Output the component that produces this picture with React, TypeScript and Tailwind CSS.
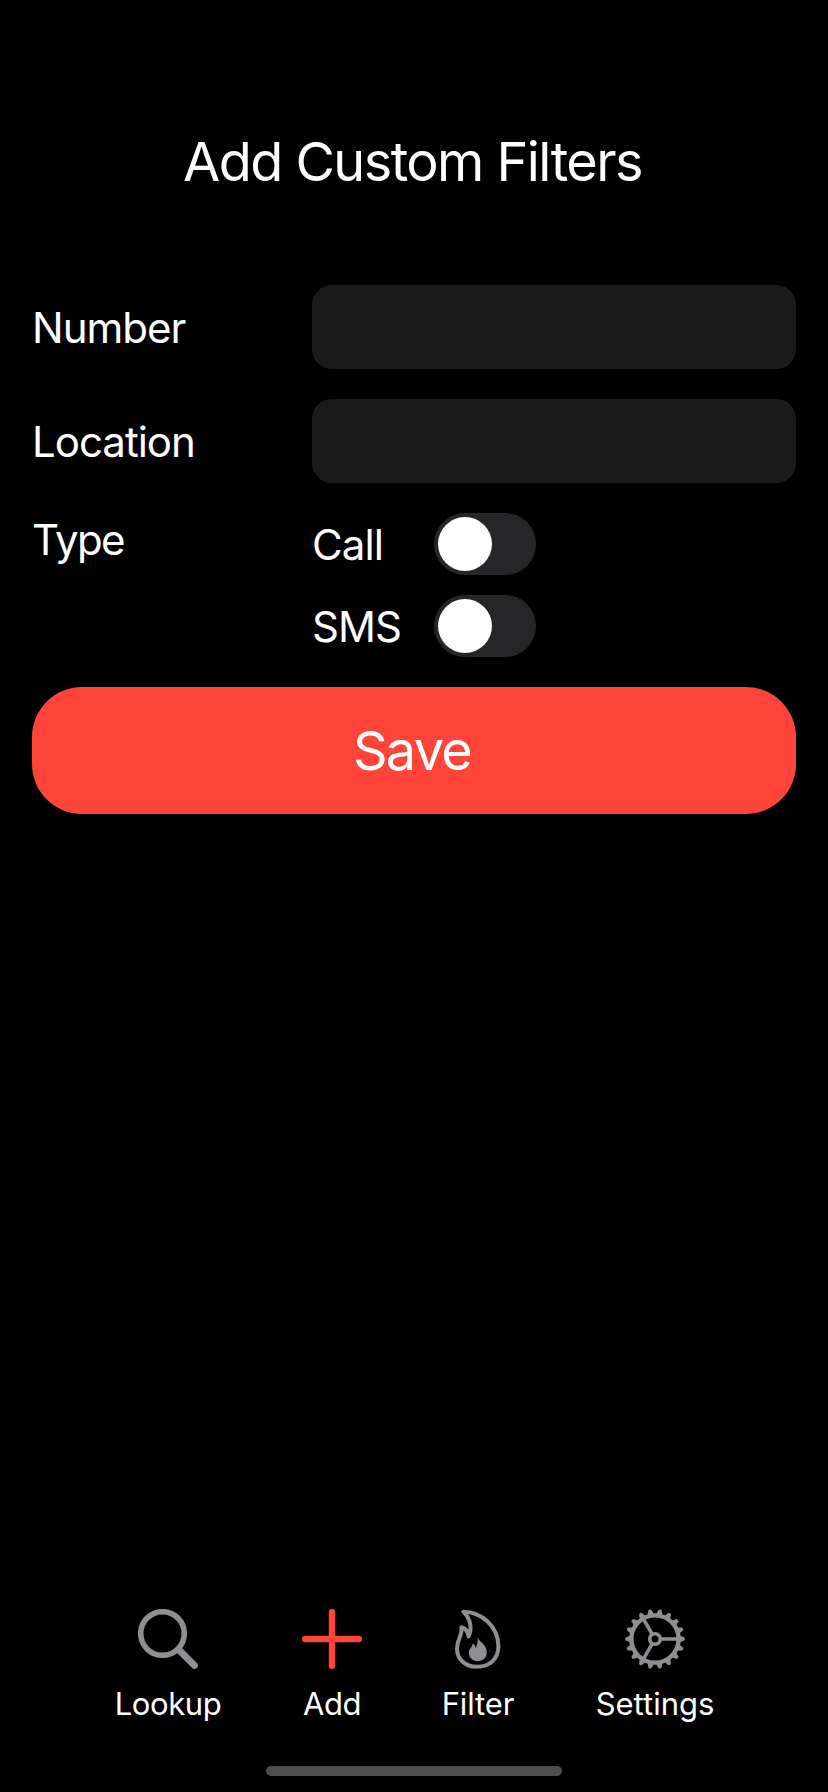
import { useState, type ReactNode } from "react";

function SearchIcon() {
  return (
    <svg viewBox="0 0 60 60" className="size-[60px]" fill="none" stroke="currentColor" strokeLinecap="round">
      <circle cx="24.5" cy="24.5" r="21.8" strokeWidth="5.6" />
      <path d="M41 41L56.4 56.4" strokeWidth="7" />
    </svg>
  );
}

function PlusIcon() {
  return (
    <svg viewBox="0 0 60 60" className="size-[60px]" fill="none" stroke="currentColor" strokeWidth="6.4" strokeLinecap="round">
      <path d="M30 3.2V56.8M3.2 30H56.8" />
    </svg>
  );
}

function FlameIcon() {
  return (
    <svg viewBox="0 0 60 60" className="size-[60px]" fill="none" stroke="currentColor" strokeLinejoin="round">
      <path
        d="M15.4 2.7C34 2.7 50.4 18 50.4 37.6C50.4 50 41.5 57.8 29 57.8C16.8 57.8 9 49.8 9 39.4C9 30.4 14.6 26.4 13.4 18.2C17.4 19 19.8 23 20.6 27.4C24.4 19.6 22.6 9.5 15.4 2.7Z"
        strokeWidth="4"
      />
      <path
        d="M29.6 27.8C30.6 33.4 38.8 34.6 38.8 43.2C38.8 48.6 34.8 52.2 29.8 52.2C24.6 52.2 20.9 48.8 20.9 43.8C20.9 39.6 24.4 38.4 24.6 34.6C26.6 35.4 27.4 37 27.4 39.2C29.6 36 30 31.6 29.6 27.8Z"
        fill="currentColor"
        stroke="none"
      />
    </svg>
  );
}

const toothAngles = Array.from({ length: 18 }, (_, i) => i * 20);

function GearIcon() {
  return (
    <svg viewBox="0 0 60 60" className="size-[60px]" fill="none" stroke="currentColor">
      {toothAngles.map((a) => (
        <path
          key={a}
          d="M54.4 26.6L59.4 28.5Q60.4 30 59.4 31.5L54.4 33.4Z"
          fill="currentColor"
          stroke="none"
          transform={`rotate(${a} 30 30)`}
        />
      ))}
      <circle cx="30" cy="30" r="23.6" strokeWidth="4.4" />
      <circle cx="30" cy="30" r="5.3" strokeWidth="3.6" />
      <path d="M36 30H53M27 24.8L18.5 10.1M27 35.2L18.5 49.9" strokeWidth="3.6" />
    </svg>
  );
}

function Field({ id, label }: { id: string; label: string }) {
  return (
    <div className="flex h-[84px] items-center">
      <label htmlFor={id} className="w-[280px] pt-[2px] text-[42px] leading-[50px] tracking-[-1px]">
        {label}
      </label>
      <input
        id={id}
        className="h-full w-[484px] rounded-[20px] bg-[#1a1a1a] px-5 text-[40px] outline-none"
      />
    </div>
  );
}

function Toggle({ label }: { label: string }) {
  const [on, setOn] = useState(false);
  return (
    <div className="flex h-[62px] items-center">
      <span className="w-[122px] pt-px text-[42px] leading-[50px] tracking-[-0.9px]">{label}</span>
      <button
        role="switch"
        aria-checked={on}
        aria-label={label}
        onClick={() => setOn(!on)}
        className={`flex h-[62px] w-[102px] items-center rounded-full p-1 ${on ? "justify-end bg-[#30d158]" : "justify-start bg-[#262628]"}`}
      >
        <span className="size-[54px] rounded-full bg-white" />
      </button>
    </div>
  );
}

function Tab({ label, width, tracking, active, children }: { label: string; width: string; tracking: string; active?: boolean; children: ReactNode }) {
  return (
    <button className={`flex flex-col items-center ${width}`}>
      <span className={active ? "text-[#ff453a]" : "text-[#8e8e93]"}>{children}</span>
      <span className={`mt-[15px] text-[31px] leading-[40px] whitespace-nowrap ${tracking}`}>{label}</span>
    </button>
  );
}

export default function App() {
  return (
    <div className="flex h-[1792px] w-[828px] flex-col bg-black font-['Inter',sans-serif] text-white">
      <h1 className="pt-[130px] pr-[3px] text-center text-[54px] leading-[64px] tracking-[-1.55px]">Add Custom Filters</h1>

      <main className="mt-[91px] flex flex-col px-8">
        <div className="flex flex-col gap-[30px]">
          <Field id="number" label="Number" />
          <Field id="location" label="Location" />
          <div className="flex items-start">
            <span className="w-[280px] pt-[2px] text-[42px] leading-[50px] tracking-[-1.6px]">Type</span>
            <div className="flex flex-col gap-5">
              <Toggle label="Call" />
              <Toggle label="SMS" />
            </div>
          </div>
        </div>
        <button className="mt-[30px] h-[127px] rounded-[50px] bg-[#ff453a] pr-[4px] text-[54px] leading-[64px] tracking-[-1.7px]">Save</button>
      </main>

      <nav className="mt-auto flex justify-center gap-20 pl-[2px]">
        <Tab label="Lookup" width="w-[108px]" tracking="tracking-[-0.4px]"><SearchIcon /></Tab>
        <Tab label="Add" width="w-[60px]" tracking="tracking-[-0.4px]" active><PlusIcon /></Tab>
        <Tab label="Filter" width="w-[72px]" tracking="tracking-[-0.1px]"><FlameIcon /></Tab>
        <Tab label="Settings" width="w-[122px]" tracking="tracking-normal"><GearIcon /></Tab>
      </nav>
      <div className="mt-[42px] mb-4 h-[10px] w-[296px] self-center rounded-full bg-[#4d4d4d]" />
    </div>
  );
}
